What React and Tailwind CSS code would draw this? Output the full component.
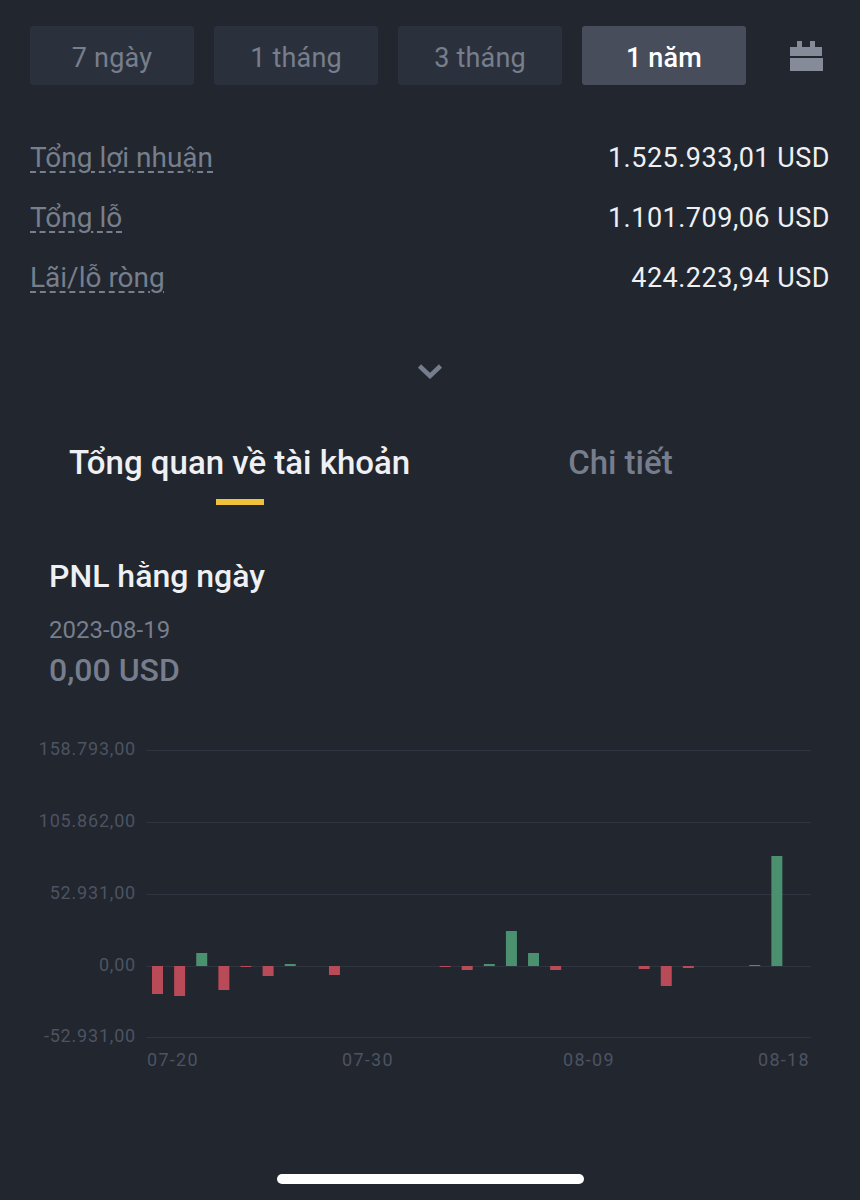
const font = { fontFamily: '"Roboto", "Noto Sans", sans-serif' };

const periods = [
  { label: "7 ngày" },
  { label: "1 tháng" },
  { label: "3 tháng" },
  { label: "1 năm", active: true },
];

const stats = [
  ["Tổng lợi nhuận", "1.525.933,01 USD"],
  ["Tổng lỗ", "1.101.709,06 USD"],
  ["Lãi/lỗ ròng", "424.223,94 USD"],
];

const grid = [
  [750, "158.793,00"],
  [822, "105.862,00"],
  [894, "52.931,00"],
  [966, "0,00"],
  [1037, "-52.931,00"],
];

const base = 966;
// [slot index, signed height in px]
const bars = [
  [0, -28], [1, -30], [2, 13], [3, -24], [4, -1], [5, -10], [6, 2], [8, -9],
  [13, -1], [14, -4], [15, 2], [16, 35], [17, 13], [18, -4],
  [22, -3], [23, -20], [24, -2], [27, 1], [28, 110],
];

const xLabels = [
  [147, "07-20"],
  [342, "07-30"],
  [563, "08-09"],
  [758, "08-18"],
];

function Chart() {
  const top = 730;
  return (
    <svg width="860" height="350" viewBox={`0 ${top} 860 350`} className="block">
      {grid.map(([y, t]) => (
        <g key={t}>
          <line x1="146" x2="811" y1={y + 0.5} y2={y + 0.5} stroke="#2e3440" strokeWidth="1" />
          <text x="136" y={y + 5} textAnchor="end" fontSize="18" fill="#4d5361" letterSpacing="0.8" style={font}>{t}</text>
        </g>
      ))}
      {bars.map(([i, h]) => {
        const x = 152 + 22.12 * i;
        return (
          <rect
            key={i}
            x={x}
            y={h > 0 ? base - h : base}
            width="11"
            height={Math.abs(h)}
            fill={h > 0 ? "#4b9170" : "#b94a58"}
          />
        );
      })}
      {xLabels.map(([x, t]) => (
        <text key={t} x={x} y="1066" fontSize="18" fill="#4d5361" letterSpacing="1.3" style={font}>{t}</text>
      ))}
    </svg>
  );
}

export default function App() {
  return (
    <div className="relative w-[860px] h-[1200px] overflow-hidden bg-[#21262f]" style={font}>
      <div className="flex items-center pl-[30px] pt-[26px]">
        <div className="flex gap-[20px]">
          {periods.map((p) => (
            <div
              key={p.label}
              className={`w-[164px] h-[59px] rounded-[3px] flex items-center justify-center pt-[5px] text-[27px] tracking-[0.2px] ${
                p.active ? "bg-[#474d5a] text-white font-medium" : "bg-[#2b313c] text-[#777e8c]"
              }`}
            >
              {p.label}
            </div>
          ))}
        </div>
        <svg width="34" height="31" viewBox="0 0 34 31" className="ml-[43px]" fill="#858b99">
          <path d="M1 7h7V1h5v6h8V1h5v6h7v9H1z" />
          <rect x="1" y="18" width="33" height="13" />
        </svg>
      </div>

      <div className="mt-[58px] pl-[30px] pr-[30px] flex flex-col gap-[30px]">
        {stats.map(([k, v]) => (
          <div key={k} className="flex justify-between items-center h-[30px] text-[27px]">
            <span className="text-[28px] text-[#777e8c] underline decoration-dashed decoration-[1.5px] underline-offset-[4px]">{k}</span>
            <span className="text-[#eef0f3] tracking-[0.5px]">{v}</span>
          </div>
        ))}
      </div>

      <div className="flex justify-center mt-[70px] h-[20px]">
        <svg width="26" height="16" viewBox="0 0 26 16" fill="none" stroke="#767d8c" strokeWidth="4.5">
          <path d="M2.5 3l10.5 10 10.5-10" />
        </svg>
      </div>

      <div className="relative mt-[55px] h-[70px] text-[33px]">
        <div className="flex">
          <div className="ml-[69px] font-medium text-[#eef0f3] whitespace-nowrap">Tổng quan về tài khoản</div>
          <div className="ml-[158px] font-medium text-[#767d8c] whitespace-nowrap">Chi tiết</div>
        </div>
        <div className="absolute left-[216px] top-[61px] w-[48px] h-[6px] bg-[#f0c13a]"></div>
      </div>

      <div className="pl-[49px] mt-[48px]">
        <div className="text-[32px] leading-[40px] font-medium text-[#eef0f3]">PNL hằng ngày</div>
        <div className="mt-[20px] text-[24px] leading-[28px] text-[#777e8c]">2023-08-19</div>
        <div className="mt-[8px] text-[32px] leading-[36px] font-medium text-[#767d8c]">0,00 USD</div>
      </div>

      <div className="mt-[42px]">
        <Chart />
      </div>

      <div className="absolute left-[277px] top-[1174px] w-[307px] h-[10px] rounded-full bg-white"></div>
    </div>
  );
}
